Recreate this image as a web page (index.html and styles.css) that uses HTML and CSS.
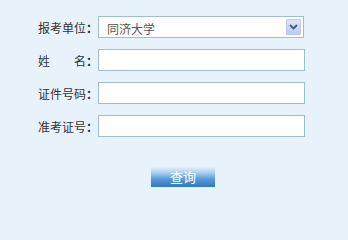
FILE: index.html
```html
<!DOCTYPE html>
<html>
<head>
<meta charset="utf-8">
<link rel="stylesheet" href="styles.css">
</head>
<body>
<form class="form">
  <div class="row">
    <label class="label"><span class="lt">报考单位</span><span class="colon">：</span></label>
    <div class="select">
      <span class="select-text">同济大学</span>
      <span class="select-btn">
        <svg width="9" height="6" viewBox="0 0 9 6"><path d="M1 1 L4.5 4.5 L8 1" fill="none" stroke="#3b5a86" stroke-width="1.8"/></svg>
      </span>
    </div>
  </div>
  <div class="row">
    <label class="label"><span class="lt lt-j"><span>姓</span><span>名</span></span><span class="colon">：</span></label>
    <input class="input" type="text">
  </div>
  <div class="row">
    <label class="label"><span class="lt">证件号码</span><span class="colon">：</span></label>
    <input class="input" type="text">
  </div>
  <div class="row">
    <label class="label"><span class="lt">准考证号</span><span class="colon">：</span></label>
    <input class="input" type="text">
  </div>
  <div class="actions">
    <button class="btn" type="button">查询</button>
  </div>
</form>
</body>
</html>
```
FILE: styles.css
```css
html, body {
  margin: 0;
  padding: 0;
  background: #e8f2fb;
}
body {
  font-family: "Noto Sans CJK SC", "DejaVu Sans", sans-serif;
  font-size: 12px;
  color: #333;
}
.form {
  display: flex;
  flex-direction: column;
  gap: 11px;
  padding: 16px 0 0 38px;
}
.row {
  display: flex;
  align-items: center;
  height: 22px;
}
.label {
  display: flex;
  align-items: center;
  width: 60px;
  flex: none;
}
.lt {
  width: 48px;
  display: flex;
  letter-spacing: 0;
}
.lt-j {
  justify-content: space-between;
}
.colon {
  width: 12px;
  font-weight: bold;
}
.input, .select {
  box-sizing: border-box;
  width: 207px;
  height: 22px;
  border: 1px solid #9dbdd0;
  background: #fff;
  margin: 0;
  padding: 0 4px;
}
.select {
  width: 206px;
  display: flex;
  align-items: center;
  justify-content: space-between;
  padding: 0 2px 0 8px;
}
.select-text {
  color: #555;
  padding-top: 2px;
}
.select-btn {
  width: 15px;
  height: 16px;
  box-sizing: border-box;
  border: 1px solid #b8c8e6;
  background: linear-gradient(#dbe6fa, #bccbf0);
  display: flex;
  align-items: center;
  justify-content: center;
  border-radius: 1px;
}
.actions {
  padding: 19px 0 0 113px;
}
.btn {
  width: 64px;
  height: 20px;
  border: 0;
  padding: 0;
  font-family: inherit;
  font-size: 13px;
  color: #fff;
  background: linear-gradient(#e4f0fb 0%, #a9cdee 30%, #5a9bd8 60%, #2f78c4 100%);
  line-height: 20px;
}
```
